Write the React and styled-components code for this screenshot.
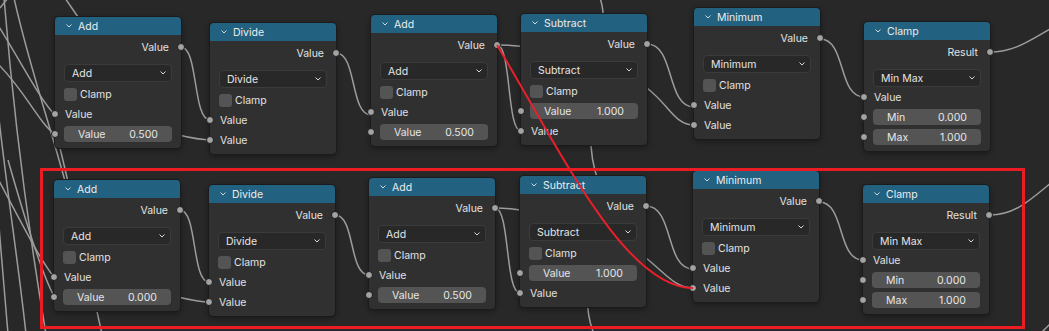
import styled, { createGlobalStyle } from "styled-components";

const GlobalStyle = createGlobalStyle`
  body {
    margin: 0;
    background: #282828;
  }
`;

const Canvas = styled.div`
  position: relative;
  width: 1049px;
  height: 331px;
  overflow: hidden;
  background: #282828;
  font-family: Inter, "Noto Sans", sans-serif;
  font-size: 10.5px;
  color: #e2e2e2;
`;

const WireLayer = styled.svg`
  position: absolute;
  left: 0;
  top: 0;
  z-index: ${(p) => (p.$front ? 2 : 0)};
  pointer-events: none;
`;

const NodeBox = styled.div`
  position: absolute;
  z-index: 1;
  width: 126px;
  box-sizing: border-box;
  background: #303030;
  border-radius: 4px;
  box-shadow: 0 0 0 1px #1b1b1b, 0 2px 6px rgba(0, 0, 0, 0.45);
  padding-bottom: 4px;
`;

const Header = styled.div`
  height: 18px;
  display: flex;
  align-items: center;
  gap: 6px;
  padding-left: 11px;
  background: #22617f;
  border-radius: 4px 4px 0 0;
  color: #ececec;
`;

const Body = styled.div`
  display: flex;
  flex-direction: column;
  padding-top: 3px;
`;

const OutputRow = styled.div`
  position: relative;
  height: 18px;
  display: flex;
  align-items: center;
  justify-content: flex-end;
  padding-right: 12px;
`;

const Dropdown = styled.div`
  height: 18px;
  margin: 8px 9px 0;
  box-sizing: border-box;
  display: flex;
  align-items: center;
  justify-content: space-between;
  padding: 0 5px 0 7px;
  background: #282828;
  border: 1px solid #3b3b3b;
  border-radius: 4px;
  color: #e4e4e4;
`;

const CheckRow = styled.div`
  height: 20px;
  margin-top: 2px;
  display: flex;
  align-items: center;
  gap: 3px;
  padding-left: 9px;
`;

const CheckBox = styled.span`
  width: 13px;
  height: 13px;
  background: #545454;
  border-radius: 3px;
`;

const SocketRow = styled.div`
  position: relative;
  height: 20px;
  display: flex;
  align-items: center;
  padding: ${(p) => (p.$field ? "0 9px" : "0 0 0 10px")};
`;

const Field = styled.div`
  flex: 1;
  height: 16px;
  display: flex;
  align-items: center;
  justify-content: space-between;
  padding: 0 14px;
  background: #545454;
  border-radius: 4px;
  color: #e6e6e6;
`;

const Socket = styled.span`
  position: absolute;
  top: calc(50% - 4px);
  ${(p) => (p.$side === "out" ? "right: -4px;" : "left: -4px;")}
  width: 8px;
  height: 8px;
  box-sizing: border-box;
  border-radius: 50%;
  background: #a3a3a3;
  border: 1px solid #1c1c1c;
`;

const Annotation = styled.div`
  position: absolute;
  z-index: 3;
  left: 40px;
  top: 168px;
  width: 985px;
  height: 161px;
  box-sizing: border-box;
  border: 3px solid #ec1c24;
  pointer-events: none;
`;

function Chevron({ color = "#d8d8d8" }) {
  return (
    <svg width="6" height="4" viewBox="0 0 6 4">
      <polyline points="0.5,0.5 3,3 5.5,0.5" fill="none" stroke={color} strokeWidth="1" />
    </svg>
  );
}

const nodes = [
  { x: 55, y: 17, title: "Add", out: "Value", mode: "Add", clamp: true,
    rows: [{ label: "Value" }, { label: "Value", value: "0.500" }] },
  { x: 210, y: 23, title: "Divide", out: "Value", mode: "Divide", clamp: true,
    rows: [{ label: "Value" }, { label: "Value" }] },
  { x: 371, y: 15, title: "Add", out: "Value", mode: "Add", clamp: true,
    rows: [{ label: "Value" }, { label: "Value", value: "0.500" }] },
  { x: 521, y: 14, title: "Subtract", out: "Value", mode: "Subtract", clamp: true,
    rows: [{ label: "Value", value: "1.000" }, { label: "Value" }] },
  { x: 694, y: 8, title: "Minimum", out: "Value", mode: "Minimum", clamp: true,
    rows: [{ label: "Value" }, { label: "Value" }] },
  { x: 864, y: 22, title: "Clamp", out: "Result", mode: "Min Max", clamp: false,
    rows: [{ label: "Value" }, { label: "Min", value: "0.000" }, { label: "Max", value: "1.000" }] },

  { x: 54, y: 180, title: "Add", out: "Value", mode: "Add", clamp: true,
    rows: [{ label: "Value" }, { label: "Value", value: "0.000" }] },
  { x: 209, y: 185, title: "Divide", out: "Value", mode: "Divide", clamp: true,
    rows: [{ label: "Value" }, { label: "Value" }] },
  { x: 369, y: 178, title: "Add", out: "Value", mode: "Add", clamp: true,
    rows: [{ label: "Value" }, { label: "Value", value: "0.500" }] },
  { x: 520, y: 176, title: "Subtract", out: "Value", mode: "Subtract", clamp: true,
    rows: [{ label: "Value", value: "1.000" }, { label: "Value" }] },
  { x: 693, y: 171, title: "Minimum", out: "Value", mode: "Minimum", clamp: true,
    rows: [{ label: "Value" }, { label: "Value" }] },
  { x: 863, y: 185, title: "Clamp", out: "Result", mode: "Min Max", clamp: false,
    rows: [{ label: "Value" }, { label: "Min", value: "0.000" }, { label: "Max", value: "1.000" }] },
];

// bezier between an output socket and an input socket
const noodle = (x1, y1, x2, y2) => {
  const h = Math.max((x2 - x1) * 0.6, 10);
  return `M ${x1} ${y1} C ${x1 + h} ${y1} ${x2 - h} ${y2} ${x2} ${y2}`;
};

const wires = [
  // left background links
  "M -4 22 C 20 60 40 100 55 115",
  "M -4 62 C 25 90 40 125 55 134",
  "M 4 -2 C 14 120 30 240 46 334",
  "M -2 110 C 8 200 18 260 26 334",
  "M 14 -2 C 30 70 55 140 70 200",
  "M 65 -2 L 80 20",
  "M 60 148 C 75 210 90 280 102 334",
  "M -4 175 C 20 220 40 260 54 277",
  "M 8 160 C 28 230 45 280 54 296",
  "M -2 215 C 2 260 5 300 8 334",
  "M 0 8 L 8 -2",
  "M 600 -2 C 615 40 575 120 598 180 C 612 220 572 280 594 334",
  // top row
  noodle(181, 47, 210, 120),
  "M 140 128 C 170 131 190 140 210 140",
  noodle(336, 53, 371, 115),
  noodle(497, 45, 521, 131),
  "M 497 45 C 540 45 610 60 647 88 C 670 106 675 125 694 125",
  noodle(647, 44, 694, 107),
  noodle(820, 39, 864, 97),
  "M 990 52 C 1015 52 1030 40 1052 28",
  // bottom row
  noodle(180, 210, 209, 282),
  "M 140 290 C 170 293 190 302 209 302",
  noodle(335, 215, 369, 275),
  noodle(495, 208, 520, 293),
  "M 495 208 C 540 208 610 232 646 258 C 665 273 675 288 693 288",
  noodle(646, 206, 693, 269),
  noodle(819, 202, 863, 260),
  "M 990 215 C 1015 215 1030 200 1052 182",
  "M 1040 334 L 1052 322",
];

function MathNode({ node }) {
  return (
    <NodeBox style={{ left: node.x, top: node.y }}>
      <Header>
        <Chevron color="#cfd8de" />
        <span>{node.title}</span>
      </Header>
      <Body>
        <OutputRow>
          {node.out}
          <Socket $side="out" />
        </OutputRow>
        <Dropdown>
          <span>{node.mode}</span>
          <Chevron />
        </Dropdown>
        {node.clamp && (
          <CheckRow>
            <CheckBox />
            <span>Clamp</span>
          </CheckRow>
        )}
        {node.rows.map((row, i) =>
          row.value ? (
            <SocketRow key={i} $field>
              <Socket $side="in" />
              <Field>
                <span>{row.label}</span>
                <span>{row.value}</span>
              </Field>
            </SocketRow>
          ) : (
            <SocketRow key={i}>
              <Socket $side="in" />
              {row.label}
            </SocketRow>
          )
        )}
      </Body>
    </NodeBox>
  );
}

export default function App() {
  return (
    <>
      <GlobalStyle />
      <Canvas>
        <WireLayer width="1049" height="331" viewBox="0 0 1049 331">
          {wires.map((d, i) => (
            <path key={i} d={d} fill="none" stroke="#9c9c9c" strokeWidth="1.5" />
          ))}
        </WireLayer>
        {nodes.map((n, i) => (
          <MathNode key={i} node={n} />
        ))}
        {/* the highlighted link is drawn over the nodes */}
        <WireLayer $front width="1049" height="331" viewBox="0 0 1049 331">
          <path d="M 497 45 C 560 150 625 288 693 288" fill="none" stroke="#e8202a" strokeWidth="2" />
        </WireLayer>
        <Annotation />
      </Canvas>
    </>
  );
}
